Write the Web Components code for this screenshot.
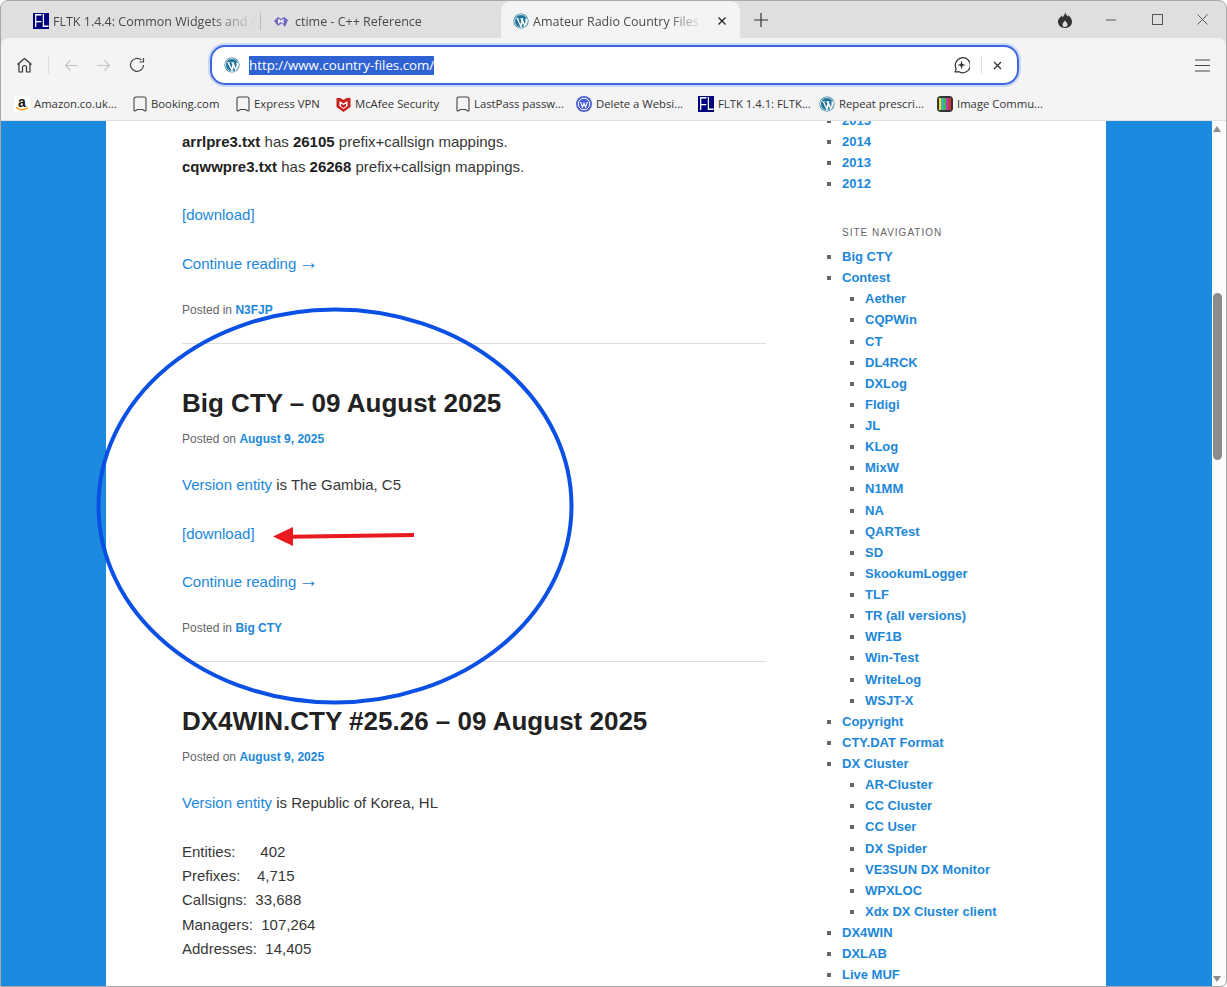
<!DOCTYPE html>
<html lang="en">
<head>
<meta charset="utf-8">
<title>Amateur Radio Country Files</title>
<style>
  html, body { margin: 0; height: 100%; overflow: hidden; background: #fff; }
  body { font-family: "Liberation Sans", Arial, sans-serif; }
</style>
</head>
<body>
<browser-window>
  <tab-strip slot="tabs"></tab-strip>
  <nav-toolbar slot="toolbar"></nav-toolbar>
  <bookmark-bar slot="bookmarks"></bookmark-bar>
  <site-page slot="page">
    <div slot="main">
      <blog-post class="cut" foot="N3FJP">
        <p><b>arrlpre3.txt</b> has <b>26105</b> prefix+callsign mappings.<br><b>cqwwpre3.txt</b> has <b>26268</b> prefix+callsign mappings.</p>
        <p><a>[download]</a></p>
        <p><a>Continue reading <span style="font-size:20px;line-height:0;margin-left:-2px">→</span></a></p>
      </blog-post>
      <blog-post heading="Big CTY – 09 August 2025" date="August 9, 2025" foot="Big CTY">
        <p><a>Version entity</a> is The Gambia, C5</p>
        <p><a>[download]</a></p>
        <p><a>Continue reading <span style="font-size:20px;line-height:0;margin-left:-2px">→</span></a></p>
      </blog-post>
      <blog-post heading="DX4WIN.CTY #25.26 – 09 August 2025" date="August 9, 2025">
        <p><a>Version entity</a> is Republic of Korea, HL</p>
        <p>Entities:&nbsp;&nbsp;&nbsp;&nbsp;&nbsp;&nbsp;402<br>Prefixes:&nbsp;&nbsp;&nbsp;&nbsp;4,715<br>Callsigns:&nbsp;&nbsp;33,688<br>Managers:&nbsp;&nbsp;107,264<br>Addresses:&nbsp;&nbsp;14,405</p>
      </blog-post>
    </div>
    <side-nav slot="side"></side-nav>
  </site-page>
</browser-window>

<script>
const WP = (s) => `<svg width="${s}" height="${s}" viewBox="0 0 16 16" style="flex:none"><circle cx="8" cy="8" r="7.6" fill="#21759b"/><circle cx="8" cy="8" r="6.5" fill="none" stroke="#fff" stroke-width=".8"/><path d="M2.6 5.2h3.5v.5h-.8l2 5.3 1.1-3.1-.8-2.2h-.6v-.5h3.5v.5h-.8l2 5.3.9-2.9c.3-1.1-.3-1.6-.6-2.3h2.2c.5 1.8.3 2.9-2.2 8.2l-.4.4-1.8-4.3-1.6 4.3h-.4L3.6 5.7h-1z" fill="#fff"/></svg>`;
const FL = (s) => `<span style="flex:none;display:inline-flex;align-items:center;justify-content:center;width:${s}px;height:${s}px;background:#00007c;color:#fff;font:${s + 2}px/1 'Liberation Sans',sans-serif;overflow:hidden"><span style="display:inline-block;transform:scaleX(.72)">FL</span></span>`;
const BM = `<svg width="14" height="16" viewBox="0 0 14 16" style="flex:none"><path d="M1 14.5V3a2 2 0 0 1 2-2h8a2 2 0 0 1 2 2v11.5a.6.6 0 0 1-1 .4L9.5 13.5h-5L2 14.9a.6.6 0 0 1-1-.4z" fill="none" stroke="#444" stroke-width="1.1" stroke-linejoin="round"/></svg>`;

class BrowserWindow extends HTMLElement {
  constructor() {
    super();
    this.attachShadow({ mode: "open" }).innerHTML = `
    <style>
      :host { display: flex; flex-direction: column; width: 1227px; height: 987px; overflow: hidden; box-sizing: border-box;
        background: #dfdfdf; border: 1px solid #a9a9a9; border-radius: 8px 8px 6px 0; }
    </style>
    <slot name="tabs"></slot><slot name="toolbar"></slot><slot name="bookmarks"></slot><slot name="page"></slot>`;
  }
}

class BrowserTab extends HTMLElement {
  constructor() {
    super();
    this.attachShadow({ mode: "open" }).innerHTML = `
    <style>
      :host { display: flex; align-items: center; gap: 4px; box-sizing: border-box; height: 37px;
        font: 12.5px "Open Sans", "Liberation Sans", sans-serif; color: #4a4a4a; white-space: nowrap; overflow: hidden; }
      :host([active]) { background: #f4f4f4; border-radius: 10px 10px 0 0; }
      .t { flex: 1; min-width: 0; overflow: hidden; -webkit-mask-image: linear-gradient(90deg, #000 78%, transparent); mask-image: linear-gradient(90deg, #000 78%, transparent); }
    </style>
    <slot name="icon"></slot><span class="t"><slot></slot></span><slot name="close"></slot>`;
  }
}

class TabStrip extends HTMLElement {
  constructor() {
    super();
    this.attachShadow({ mode: "open" }).innerHTML = `
    <style>
      :host { display: flex; align-items: flex-start; height: 37px; flex: none; box-sizing: border-box; }
      browser-tab:nth-of-type(1) { width: 259px; padding: 3px 4px 0 32px; }
      browser-tab:nth-of-type(2) { width: 241px; padding: 0 4px 0 12px; gap: 6px; border-left: 1px solid #bbb; height: 17px; margin-top: 12px; overflow: visible; }
      browser-tab:nth-of-type(3) { width: 239px; padding: 3px 4px 0 12px; }
      .plus { margin: 11px 0 0 13px; }
      .right { margin-left: auto; display: flex; align-items: center; height: 37px; }
      .right svg { display: block; }
      .close { flex: none; width: 28px; display: flex; justify-content: center; }
    </style>
    <browser-tab><span slot="icon" style="display:flex">${FL(16)}</span>FLTK 1.4.4: Common Widgets and Attributes</browser-tab>
    <browser-tab><svg slot="icon" width="16" height="14" viewBox="0 0 16 14" style="flex:none"><path d="M1 6l4-4 3 2 3-2 4 3-3 7-3-4-4 3z" fill="#6f66bd"/><path d="M5 3.5l3 2 2.5-2 .5 5-3-1.5-3 2z" fill="#e8e8f4"/></svg>ctime - C++ Reference</browser-tab>
    <browser-tab active><span slot="icon" style="display:flex">${WP(16)}</span>Amateur Radio Country Files | Amateur<span class="close" slot="close"><svg width="10" height="10" viewBox="0 0 10 10"><path d="M1.5 1.5l7 7m0-7l-7 7" stroke="#222" stroke-width="1.3"/></svg></span></browser-tab>
    <svg class="plus" width="16" height="16" viewBox="0 0 16 16"><path d="M8 1v14M1 8h14" stroke="#333" stroke-width="1.2"/></svg>
    <div class="right">
      <svg width="14" height="16" viewBox="0 0 14 16" style="margin-right:34px"><path d="M7 0c.6 2.5 2 3.2 3 4.8.3-.6.4-1.2.3-1.9C12.2 4.6 14 7 14 9.7 14 13.5 11 16 7 16s-7-2.5-7-6.2C0 6.5 2.6 5.5 4 3.3c.3.9.3 1.5.2 2.3C5.6 4.5 7.2 2.5 7 0zM7 8.5C6 10 4.5 11 4.5 12.8 4.5 14.2 5.6 15 7 15s2.5-.8 2.5-2.200C9.5 11 8 10 7 8.5z" fill="#333" fill-rule="evenodd"/></svg>
      <svg width="10" height="10" viewBox="0 0 10 10" style="margin-right:36px"><path d="M0 5h10" stroke="#555"/></svg>
      <svg width="11" height="11" viewBox="0 0 11 11" style="margin-right:34px"><rect x=".5" y=".5" width="10" height="10" fill="none" stroke="#555"/></svg>
      <svg width="11" height="11" viewBox="0 0 11 11" style="margin-right:18px"><path d="M.5.5l10 10m0-10l-10 10" stroke="#555"/></svg>
    </div>`;
  }
}

class NavToolbar extends HTMLElement {
  constructor() {
    super();
    this.attachShadow({ mode: "open" }).innerHTML = `
    <style>
      :host { display: flex; align-items: center; height: 51px; flex: none; background: #f4f4f4; box-sizing: border-box; padding: 3px 0 0 15px; border-radius: 8px 8px 0 0; }
      svg { display: block; flex: none; }
      .sep { width: 1px; height: 18px; background: #ddd; margin: 0 15px 0 15px; }
      .url { display: flex; align-items: center; box-sizing: border-box; width: 809px; height: 40px; margin-left: 65px; background: #fff; border: 2px solid #3d66e0; border-radius: 15px;
        box-shadow: 0 0 0 2px #cbd7f7; padding: 0 11px 0 12px; }
      .addr { margin-left: 9px; font: 13.3px "Open Sans", "Liberation Sans", sans-serif; line-height: 19px; background: #2f63d4; color: #fff; height: 19px; }
      .end { margin-left: auto; display: flex; align-items: center; }
      .end i { width: 1px; height: 18px; background: #ddd; margin: 0 11px; }
      .menu { margin-left: auto; margin-right: 16px; }
    </style>
    <svg width="17" height="17" viewBox="0 0 17 17"><path d="M1.5 7.5L8.5 1.5l7 6M3 6.5V15h3.5v-4.5a2 2 0 0 1 4 0V15H14V6.5" fill="none" stroke="#333" stroke-width="1.2" stroke-linejoin="round"/></svg>
    <span class="sep"></span>
    <svg width="15" height="13" viewBox="0 0 15 13" style="margin-right:17px"><path d="M14 6.5H1.5M6.5 1.5l-5 5 5 5" fill="none" stroke="#c4c4c4" stroke-width="1.2"/></svg>
    <svg width="15" height="13" viewBox="0 0 15 13" style="margin-right:18px"><path d="M1 6.5h12.5M8.5 1.5l5 5-5 5" fill="none" stroke="#c4c4c4" stroke-width="1.2"/></svg>
    <svg width="16" height="16" viewBox="0 0 16 16"><path d="M14.5 8A6.5 6.5 0 1 1 12.3 3M14.5 1v4h-4" fill="none" stroke="#444" stroke-width="1.2"/></svg>
    <div class="url">
      <span style="display:flex">${WP(16)}</span>
      <span class="addr">http://www.country-files.com/</span>
      <span class="end">
        <svg width="18" height="18" viewBox="0 0 18 18"><path d="M3 16l1.2-3.200A7.500 7.500 0 1 1 7 15.700z" fill="none" stroke="#333" stroke-width="1.2" stroke-linejoin="round"/><path d="M9.500 4.500l1 3.500 3 1-3 1-1 3.500-1-3.500-3-1 3-1z" fill="#333"/></svg>
        <i></i>
        <svg width="9" height="9" viewBox="0 0 9 9" style="margin-right:4px"><path d="M1 1l7 7m0-7L1 8" stroke="#333" stroke-width="1.3"/></svg>
      </span>
    </div>
    <svg class="menu" width="15" height="13" viewBox="0 0 15 13"><path d="M0 1h15M0 6.5h15M0 12h15" stroke="#444" stroke-width="1.2"/></svg>`;
  }
}

class BookmarkBar extends HTMLElement {
  constructor() {
    super();
    const items = [
      [`<svg width="16" height="16" viewBox="0 0 16 16" style="flex:none"><rect width="16" height="16" rx="2" fill="#fff"/><text x="8" y="10.5" text-anchor="middle" font-family="Liberation Sans" font-weight="700" font-size="14" fill="#111">a</text><path d="M2 11.500c3.500 3 8.500 3 12 0" fill="none" stroke="#f90" stroke-width="1.5"/></svg>`, "Amazon.co.uk..."],
      [BM, "Booking.com"],
      [BM, "Express VPN"],
      [`<svg width="15" height="16" viewBox="0 0 14 16" style="flex:none"><path d="M0 2l4 0 3 2 3-2 4 0v9l-7 5-7-5z" fill="#c8201f"/><path d="M3 5l4 2.5L11 5v5l-4 3-4-3z" fill="#fff"/><path d="M4.5 7.5L7 9l2.5-1.5V10L7 12l-2.500-2z" fill="#c8201f"/></svg>`, "McAfee Security"],
      [BM, "LastPass passw..."],
      [`<svg width="16" height="16" viewBox="0 0 16 16" style="flex:none"><circle cx="8" cy="8" r="8" fill="#4a5fd9"/><circle cx="8" cy="8" r="5.8" fill="none" stroke="#fff"/><path d="M4.5 6l2 5 1.5-3.800L9.500 11l2-5" fill="none" stroke="#fff" stroke-width="1.1"/></svg>`, "Delete a Websi..."],
      [FL(16), "FLTK 1.4.1: FLTK..."],
      [WP(16), "Repeat prescri..."],
      [`<svg width="16" height="16" viewBox="0 0 16 16" style="flex:none"><rect width="16" height="16" rx="4" fill="#333"/><path d="M2 2h2.4v12H2z" fill="#e8e23a"/><path d="M4.4 2h2.4v12H4.4z" fill="#35c7d0"/><path d="M6.8 2h2.4v12H6.8z" fill="#3ac04a"/><path d="M9.2 2h2.4v12H9.2z" fill="#d13ac2"/><path d="M11.6 2H14v12h-2.4z" fill="#d8322e"/></svg>`, "Image Commu..."],
    ];
    this.attachShadow({ mode: "open" }).innerHTML = `
    <style>
      :host { display: grid; grid-template-columns: 119px 103px 100px 120px 120px 122px 121px 118px 1fr; align-items: center; height: 32px; flex: none; background: #f4f4f4; padding: 0 0 2px 13px; box-sizing: border-box;
        font: 11.3px "Open Sans", "Liberation Sans", sans-serif; color: #333; border-bottom: 1px solid #e0e0e0; }
      .bm { display: flex; align-items: center; gap: 4px; white-space: nowrap; }
    </style>${items.map(([icon, label]) => `<span class="bm">${icon}<span>${label}</span></span>`).join("")}`;
  }
}

class SitePage extends HTMLElement {
  constructor() {
    super();
    this.attachShadow({ mode: "open" }).innerHTML = `
    <style>
      :host { display: flex; flex: 1; min-height: 0; overflow: hidden; background: #1c8ade; position: relative; }
      .sheet { margin-left: 105px; width: 1000px; background: #fff; display: grid; grid-template-columns: 584px 340px; padding-left: 76px; box-sizing: border-box; overflow: hidden; }
      .sb { margin-left: auto; width: 14px; background: #fbfbfb; flex: none; position: relative; }
      .up, .down { position: absolute; left: 1px; width: 0; height: 0; border: 4.5px solid transparent; }
      .up { top: 5px; border-top: 0; border-bottom: 6px solid #8b8b8b; }
      .down { bottom: 4px; border-bottom: 0; border-top: 6px solid #8b8b8b; }
      .thumb { position: absolute; left: 1px; top: 172px; width: 9px; height: 167px; background: #8b8b8b; border-radius: 5px; }
      .note { position: absolute; left: 0; top: 0; pointer-events: none; }
    </style>
    <div class="sheet"><div><slot name="main"></slot></div><div><slot name="side"></slot></div></div>
    <div class="sb"><div class="up"></div><div class="thumb"></div><div class="down"></div></div>
    <svg class="note" width="1212" height="866" viewBox="1 121 1212 866">
      <ellipse cx="335" cy="506" rx="236.5" ry="196.5" fill="none" stroke="#0a50e4" stroke-width="4"/>
      <path d="M414 535L290 536.8" stroke="#e8191f" stroke-width="4" fill="none"/>
      <path d="M273 536.5l20-9.5v19z" fill="#e8191f"/>
    </svg>`;
  }
}

class BlogPost extends HTMLElement {
  constructor() {
    super();
    const h = this.getAttribute("heading");
    const d = this.getAttribute("date");
    const f = this.getAttribute("foot");
    this.attachShadow({ mode: "open" }).innerHTML = `
    <style>
      :host { display: block; border-bottom: 1px solid #ddd; padding: 40.5px 0 22.3px; font-size: 15px; line-height: 24.375px; color: #373737; }
      :host(.cut) { padding-top: 9.2px; padding-bottom: 22.4px; }
      :host(:last-of-type) { border: 0; }
      h1 { margin: 0; font-size: 26px; line-height: 39px; font-weight: 700; color: #222; }
      .meta { font-size: 12px; line-height: 19.5px; color: #666; }
      .meta b { color: #1c87d9; }
      .date { margin: 6.5px 0 23.6px; }
      .foot { margin-top: 24.4px; }
      ::slotted(p) { margin: 0 0 24.375px !important; }
      ::slotted(p:last-of-type) { margin-bottom: 0 !important; }
    </style>
    ${h ? `<h1>${h}</h1>` : ""}
    ${d ? `<div class="meta date">Posted on <b>${d}</b></div>` : ""}
    <slot></slot>
    ${f ? `<div class="meta foot">Posted in <b>${f}</b></div>` : ""}`;
  }
  connectedCallback() {
    this.querySelectorAll("a").forEach((a) => (a.style.color = "#1c87d9"));
    this.querySelectorAll("b").forEach((b) => (b.style.color = "#222"));
  }
}

class SideNav extends HTMLElement {
  constructor() {
    super();
    const list = (items) => `<ul>${items.map((i) => Array.isArray(i) ? `<li>${i[0]}${list(i[1])}</li>` : `<li>${i}</li>`).join("")}</ul>`;
    const nav = [
      "Big CTY",
      ["Contest", ["Aether", "CQPWin", "CT", "DL4RCK", "DXLog", "Fldigi", "JL", "KLog", "MixW", "N1MM", "NA", "QARTest", "SD", "SkookumLogger", "TLF", "TR (all versions)", "WF1B", "Win-Test", "WriteLog", "WSJT-X"]],
      "Copyright", "CTY.DAT Format",
      ["DX Cluster", ["AR-Cluster", "CC Cluster", "CC User", "DX Spider", "VE3SUN DX Monitor", "WPXLOC", "Xdx DX Cluster client"]],
      "DX4WIN", "DXLAB", "Live MUF",
    ];
    this.attachShadow({ mode: "open" }).innerHTML = `
    <style>
      :host { display: block; margin-top: -11.5px; font-size: 13px; line-height: 21.125px; font-weight: 700; color: #1c87d9; }
      ul { list-style: square; margin: 0; padding: 0 0 0 23px; }
      li::marker { color: #666; }
      .wrap { margin-left: 76px; }
      .wrap > ul { padding-left: 0; }
      h3 { margin: 31px 0 5px; font-size: 10px; line-height: 16px; font-weight: 400; letter-spacing: 1px; text-transform: uppercase; color: #666; }
    </style>
    <div class="wrap">
      ${list(["2015", "2014", "2013", "2012"])}
      <h3>Site Navigation</h3>
      ${list(nav)}
    </div>`;
  }
}

customElements.define("browser-window", BrowserWindow);
customElements.define("browser-tab", BrowserTab);
customElements.define("tab-strip", TabStrip);
customElements.define("nav-toolbar", NavToolbar);
customElements.define("bookmark-bar", BookmarkBar);
customElements.define("site-page", SitePage);
customElements.define("blog-post", BlogPost);
customElements.define("side-nav", SideNav);
</script>
</body>
</html>
